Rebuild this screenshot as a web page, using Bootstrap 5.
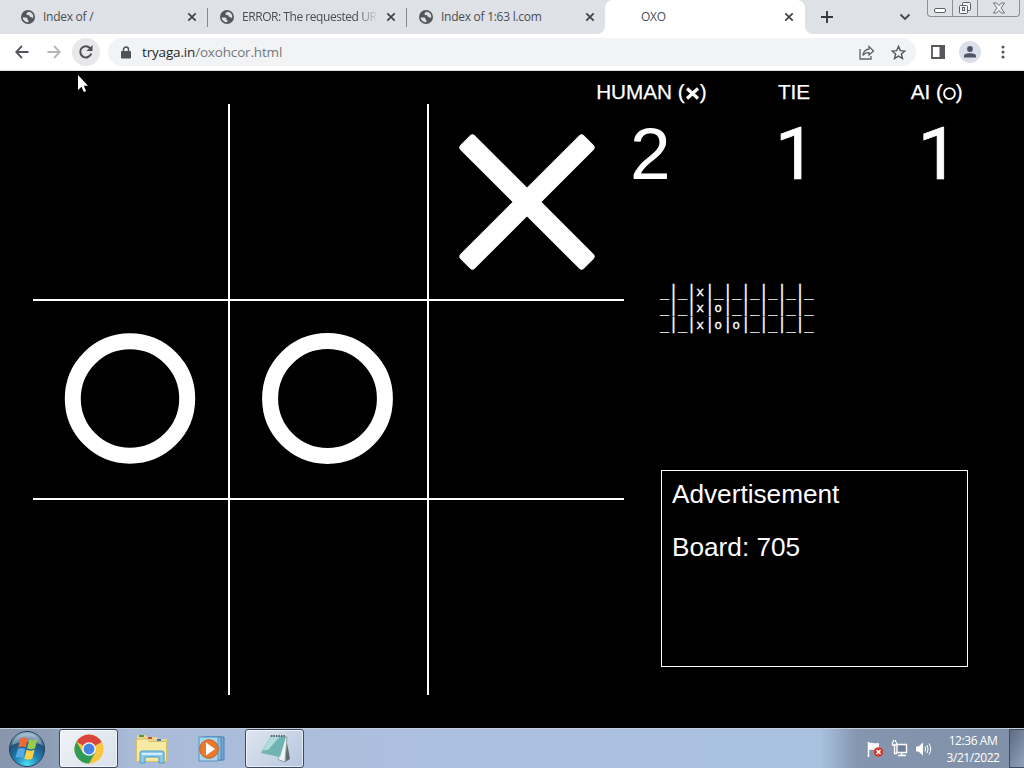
<!DOCTYPE html>
<html lang="en">
<head>
  <meta charset="UTF-8">
  <title>OXO</title>
  <link href="https://cdn.jsdelivr.net/npm/bootstrap@5.3.0/dist/css/bootstrap.min.css" rel="stylesheet">
  <style>
    body {
      width: 1024px;
      height: 768px;
      overflow: hidden;
      background: #000;
      font-family: "Open Sans", "Noto Sans", sans-serif;
    }
    svg { display: block; flex-shrink: 0; }

    /* browser tabs */
    .tabstrip { height: 34px; background: #dee1e6; }
    .tab { height: 34px; font-size: 12px; color: #4b4e53; white-space: nowrap; letter-spacing: -0.27px; }
    .tab-a { width: 208px; padding-left: 21px; padding-right: 11px; }
    .tab-b { width: 199px; padding-left: 12px; padding-right: 11px; }
    .tab-c { width: 198px; padding-left: 12px; padding-right: 10px; }
    .tab-sep { width: 1px; height: 19px; background: #85888d; margin-left: -1px; }
    .tab-title { margin-left: 8px; margin-right: 8px; }
    .tab-fade {
      letter-spacing: -0.45px;
      -webkit-mask-image: linear-gradient(90deg, #000 85%, transparent);
      mask-image: linear-gradient(90deg, #000 85%, transparent);
    }
    .tab-active { width: 200px; background: #fff; border-radius: 8px 8px 0 0; padding: 0 11px 0 36px; }
    .corner-l, .corner-r { width: 8px; height: 34px; background: #fff; }
    .corner-l { margin-left: -8px; }
    .corner-l::before, .corner-r::before { content: ""; display: block; height: 34px; background: #dee1e6; }
    .corner-l::before { border-bottom-right-radius: 8px; }
    .corner-r::before { border-bottom-left-radius: 8px; }
    .win-btns { width: 93px; height: 17px; margin-left: 16px; border: 1px solid #8b9097; border-top: 0; border-radius: 0 0 4px 4px; }
    .win-btns > div { width: 25px; border-right: 1px solid #8b9097; height: 16px; }
    .win-btns > div:last-child { border-right: 0; }

    /* address bar */
    .toolbar { height: 37px; background: #fff; border-bottom: 1px solid #dcdee1; }
    .reload { width: 28px; height: 28px; background: #e8e8ea; margin-left: 11px; }
    .omnibox { width: 808px; height: 28px; background: #f1f3f4; font-size: 13.5px; color: #75787c; padding: 0 10px 0 13px; letter-spacing: -0.17px; }
    .omnibox b { font-weight: 400; color: #26282b; }
    .url { margin-left: 11px; }
    .avatar { width: 22px; height: 22px; background: #dadfe9; margin-left: 14px; }

    /* game page */
    .game { height: 657px; color: #fff; font-family: "Liberation Sans", Arial, sans-serif; }
    .left-side { width: 580px; padding: 33px 0 0 33px; }
    .board { display: grid; width: 591px; grid-template-columns: 197px 199px 195px; grid-template-rows: 197px 199px 195px; }
    .board > div { display: flex; align-items: center; justify-content: center; }
    .line-r { border-right: 2px solid #fff; }
    .line-b { border-bottom: 2px solid #fff; }
    .right-side { width: 444px; }
    .scores { width: 428px; height: 212px; }
    .score-name { font-size: 20.7px; line-height: 24px; padding-top: 9px; white-space: nowrap; -webkit-text-stroke: 0.25px #fff; }
    .score-name svg { display: inline-block; vertical-align: -1px; }
    .score-num { font-size: 73px; line-height: 80px; margin-top: 10px; margin-left: -2px; }
    .score-one { font-family: Roboto, sans-serif; margin-left: 3px; -webkit-text-stroke: 0.7px #fff; }
    .mini { margin: 0 0 0 80px; font-family: "DejaVu Sans Mono", monospace; font-size: 15px; line-height: 16.4px; height: 187px; overflow: visible; color: #fff; -webkit-text-stroke: 0.3px #fff; }
    .mini span { font-size: 13px; letter-spacing: 1.2px; line-height: 1; }
    .ad { width: 307px; height: 197px; margin-left: 81px; border: 1px solid #fff; padding: 8px 10px; font-size: 26.2px; line-height: 30px; }
    .ad p { margin-bottom: 23px; }

    /* taskbar */
    .taskbar {
      height: 40px;
      border-top: 1px solid #c3cddb;
      background: linear-gradient(90deg, #8796ac 0, #8d9db5 50px, #a9bbd7 130px, #acbfde 400px, #a9c1df 820px, #8495af 858px, #8190a8 1024px);
    }
    .task { width: 59px; height: 39px; border: 1px solid #3d4a5e; border-radius: 3px; box-shadow: inset 0 0 0 1px rgba(255,255,255,.6); }
    .task-on { background: linear-gradient(135deg, #eff3f8, #d9e0ea); }
    .task-open { background: linear-gradient(135deg, #dfe5ee, #b4c6e0); }
    .clock { width: 66px; margin-left: 8px; font-size: 12px; line-height: 17px; color: #fff; letter-spacing: -0.42px; }
    .peek { width: 15px; height: 39px; margin-left: 3px; border: 1px solid #3f4b60; border-right: 0; background: linear-gradient(120deg, #5d6c84, #93a2b8); }

    .cursor { position: absolute; left: 77px; top: 74px; }
  </style>
</head>
<body>
  <svg width="0" height="0" class="position-absolute">
    <symbol id="globe" viewBox="0 0 14 14">
      <circle cx="7" cy="7" r="7" fill="#53575c"/>
      <path d="M1.600 7.400 5.500 7.500l1.200 1.300-.3 1 1.200.6-.3 1.800A5.500 5.500 0 0 1 1.600 7.400zM8 1.700l-1.800.8-.9 1.500 1.200 1.200 1.600-.3.700 1.800 1.600.2.600 1.300 1.300-.9A5.500 5.500 0 0 0 8 1.700z" fill="#dee1e6"/>
    </symbol>
    <symbol id="close" viewBox="0 0 10 10">
      <path d="M1.300 1.300 8.700 8.700M8.700 1.300 1.300 8.700" stroke="#3f4246" stroke-width="1.700"/>
    </symbol>
  </svg>

  <div class="tabstrip d-flex">
    <div class="tab tab-a d-flex align-items-center">
      <svg width="14" height="14"><use href="#globe"/></svg>
      <span class="tab-title flex-grow-1">Index of /</span>
      <svg width="10" height="10"><use href="#close"/></svg>
    </div>
    <div class="tab-sep align-self-center"></div>
    <div class="tab tab-b d-flex align-items-center">
      <svg width="14" height="14"><use href="#globe"/></svg>
      <span class="tab-title tab-fade flex-grow-1">ERROR: The requested UR</span>
      <svg width="10" height="10"><use href="#close"/></svg>
    </div>
    <div class="tab-sep align-self-center"></div>
    <div class="tab tab-c d-flex align-items-center">
      <svg width="14" height="14"><use href="#globe"/></svg>
      <span class="tab-title flex-grow-1">Index of 1:63 l.com</span>
      <svg width="10" height="10"><use href="#close"/></svg>
    </div>
    <div class="corner-l"></div>
    <div class="tab tab-active d-flex align-items-center justify-content-between">
      <span>OXO</span>
      <svg width="10" height="10"><use href="#close"/></svg>
    </div>
    <div class="corner-r"></div>
    <svg class="align-self-center ms-2" width="12" height="12"><path d="M6 0v12M0 6h12" stroke="#35383c" stroke-width="1.900"/></svg>
    <svg class="align-self-center ms-auto" width="12" height="8"><path d="M1.500 1.500 6 6l4.500-4.500" fill="none" stroke="#45484c" stroke-width="1.900"/></svg>
    <div class="win-btns d-flex me-1">
      <div class="d-flex justify-content-center">
        <svg width="12" height="16"><rect x=".5" y="8.500" width="11" height="4" rx="1.500" fill="#fff" stroke="#5c6068"/></svg>
      </div>
      <div class="d-flex justify-content-center">
        <svg width="14" height="16"><g fill="#f4f5f7" stroke="#5c6068"><rect x="4.500" y="2.500" width="8" height="8" rx="1"/><rect x="1.500" y="5.500" width="8" height="8" rx="1"/><rect x="4.500" y="7.500" width="2" height="3"/></g></svg>
      </div>
      <div class="d-flex justify-content-center flex-grow-1">
        <svg width="14" height="16"><path d="M1.500 3h3.200L7 5.600 9.300 3h3.200L9 8l3.500 5H9.300L7 10.400 4.700 13H1.500L5 8z" fill="#f4f5f7" stroke="#6a6e75"/></svg>
      </div>
    </div>
  </div>

  <div class="toolbar d-flex align-items-center">
    <svg width="14" height="14" fill="none" stroke="#505357" stroke-width="1.800" style="margin-left: 15px"><path d="M13.500 7H1.500M7 1 1.200 7 7 13"/></svg>
    <svg width="14" height="14" fill="none" stroke="#b4b6b9" stroke-width="1.800" style="margin-left: 18px"><path d="M.5 7h12M7 1l5.800 6L7 13"/></svg>
    <div class="reload rounded-circle d-flex align-items-center justify-content-center me-2">
      <svg width="16" height="16"><path d="M13.200 9.500A5.600 5.600 0 1 1 12 4.100" fill="none" stroke="#4d5054" stroke-width="2"/><path d="M14.500 1v6h-6z" fill="#4d5054"/></svg>
    </div>
    <div class="omnibox rounded-pill d-flex align-items-center">
      <svg width="10" height="13"><rect y="5" width="10" height="7.500" rx="1" fill="#4f5256"/><path d="M2.500 6V3.500a2.500 2.500 0 0 1 5 0V6" fill="none" stroke="#4f5256" stroke-width="1.500"/></svg>
      <span class="url"><b>tryaga.in</b>/oxohcor.html</span>
      <svg class="ms-auto" width="16" height="15" fill="none" stroke="#606368" stroke-width="1.300"><path d="M1 4v10h11v-3"/><path d="M10 1.500 14.500 6 10 10V7.700C7 7.700 5.200 8.600 4 10.500 4.300 7 6.500 4.500 10 4z"/></svg>
      <svg class="ms-3" width="15" height="15" viewBox="0 0 15 15"><path d="m7.500 1.300 1.800 4.300 4.600.4-3.500 3 1.100 4.500-4-2.400-4 2.400 1.100-4.500-3.500-3 4.600-.4z" fill="none" stroke="#55585c" stroke-width="1.400"/></svg>
    </div>
    <svg width="14" height="14" style="margin-left: 15px"><path d="M1 1h12v12H1z" fill="none" stroke="#55585c" stroke-width="1.800"/><path d="M8.500 0H14v14H8.500z" fill="#55585c"/></svg>
    <div class="avatar rounded-circle d-flex align-items-center justify-content-center">
      <svg width="14" height="14" fill="#4c5466"><circle cx="7" cy="4" r="2.900"/><path d="M1 12.500v-1.700C1 9 4.500 8.300 7 8.300s6 .7 6 2.500v1.700z"/></svg>
    </div>
    <svg width="4" height="14" fill="#505357" style="margin-left: 20px"><circle cx="2" cy="2" r="1.500"/><circle cx="2" cy="7" r="1.500"/><circle cx="2" cy="12" r="1.500"/></svg>
  </div>

  <div class="game d-flex">
    <div class="left-side">
      <div class="board">
        <div class="line-r line-b"></div>
        <div class="line-r line-b"></div>
        <div class="line-b">
          <svg width="139" height="139" fill="#fff"><g transform="translate(70 70)"><rect x="-87.400" y="-10.200" width="174.800" height="20.400" rx="3.500" transform="rotate(45)"/><rect x="-87.400" y="-10.200" width="174.800" height="20.400" rx="3.500" transform="rotate(-45)"/></g></svg>
        </div>
        <div class="line-r line-b">
          <svg width="135" height="135"><circle cx="67" cy="66.500" r="57.200" fill="none" stroke="#fff" stroke-width="16"/></svg>
        </div>
        <div class="line-r line-b">
          <svg width="135" height="135"><circle cx="66.500" cy="66.500" r="57.400" fill="none" stroke="#fff" stroke-width="16"/></svg>
        </div>
        <div class="line-b"></div>
        <div class="line-r"></div>
        <div class="line-r"></div>
        <div></div>
      </div>
    </div>

    <div class="right-side">
      <div class="scores row g-0 text-center">
        <div class="col">
          <div class="score-name">HUMAN (<svg width="15" height="13"><path d="m2 1.500 11 10M13 1.500l-11 10" stroke="#fff" stroke-width="3.200"/></svg>)</div>
          <div class="score-num">2</div>
        </div>
        <div class="col">
          <div class="score-name">TIE</div>
          <div class="score-num score-one">1</div>
        </div>
        <div class="col">
          <div class="score-name">AI (<svg width="13" height="13"><circle cx="6.500" cy="6.500" r="5.400" fill="none" stroke="#fff" stroke-width="1.900"/></svg>)</div>
          <div class="score-num score-one">1</div>
        </div>
      </div>
<pre class="mini">_|_|<span>x</span>|_|_|_|_|_|_
_|_|<span>x</span>|<span>o</span>|_|_|_|_|_
_|_|<span>x</span>|<span>o</span>|<span>o</span>|_|_|_|_</pre>
      <div class="ad">
        <p>Advertisement</p>
        <p>Board: 705</p>
      </div>
    </div>
  </div>

  <div class="taskbar d-flex align-items-center">
    <svg class="ms-2" width="38" height="38" viewBox="0 0 38 38">
      <defs>
        <radialGradient id="orb" cx=".5" cy=".95" r=".9"><stop offset="0" stop-color="#4fe0f5"/><stop offset=".4" stop-color="#1f7fb5"/><stop offset=".75" stop-color="#225379"/><stop offset="1" stop-color="#8fb0c8"/></radialGradient>
      </defs>
      <circle cx="19" cy="19" r="17.500" fill="url(#orb)" stroke="#26405c"/>
      <path d="M4 15a15.500 15.500 0 0 1 30 0c-9-4-21-4-30 0z" fill="#fff" opacity=".3"/>
      <path d="M12.500 8.500c2.500-1.500 5-1.200 7.500 0l-2.300 9c-2.300-1.200-4.900-1.200-7.500 0z" fill="#ee6a35"/>
      <path d="M21.300 9.300c2.500 1.300 5.200 1.300 8 0l-2.300 9c-2.500 1.200-5.200 1.200-8 0z" fill="#9acb4c"/>
      <path d="M9.800 18.900c2.500-1.400 5-1.200 7.500 0l-2.300 9c-2.200-1.200-4.700-1.200-7.500 0z" fill="#56a9e4"/>
      <path d="M18.600 19.700c2.500 1.300 5.200 1.300 8 0l-2.300 9c-2.500 1.200-5.200 1.200-8 0z" fill="#fbd044"/>
    </svg>
    <div class="task task-on d-flex align-items-center justify-content-center" style="margin-left: 13px">
      <svg width="30" height="30" viewBox="-16 -16 32 32">
        <circle r="15.500" fill="#f9c440"/>
        <path d="M0 0-13.400-7.800A15.500 15.500 0 0 1 13.400-7.800z" fill="#d9453d"/>
        <path d="M0 0v-7.800h13.400z" fill="#d9453d"/>
        <path d="M-13.400-7.800A15.500 15.500 0 0 0 0 15.500L6.500 4-6.500 4z" fill="#2f9b57"/>
        <circle r="7.300" fill="#f4f6f8"/>
        <circle r="5.800" fill="#4482e4"/>
      </svg>
    </div>
    <svg width="34" height="32" viewBox="0 0 34 32" style="margin-left: 16px">
      <path d="M3 2h9l1 2h10l1 2h9v8H3z" fill="#e9d88c"/>
      <path d="M5 2h5v2H5z" fill="#4c9d3e"/><path d="M14 4h4v2h-4z" fill="#c74f37"/><path d="M23 6h4v2h-4z" fill="#4a78b0"/>
      <path d="M2.500 6h11l2 2.500h17v20h-30z" fill="#f6e9a4" stroke="#d6bd69"/>
      <path d="M6 30V20q0-2 2-2h20q2 0 2 2v10h-5v-6H11v6z" fill="#8bc9ea" stroke="#4c9bc9"/>
      <path d="M8 20h20v2H8z" fill="#d3eefb"/>
    </svg>
    <svg width="28" height="28" viewBox="0 0 28 28" style="margin-left: 30px">
      <path d="M7 2h19v23H7z" fill="#70a8d4" stroke="#4a82b1"/><path d="M4 2h19v23H4z" fill="#8bbde1" stroke="#4a82b1"/><path d="M1 2h19v24H1z" fill="#a9d4ef" stroke="#5892bf"/>
      <circle cx="11" cy="14" r="9.300" fill="#e8792d" stroke="#c65e1c"/><path d="m8 7.500 9 6.500-9 6.500z" fill="#fff"/>
    </svg>
    <div class="task task-open d-flex align-items-center justify-content-center" style="margin-left: 19px">
      <svg width="32" height="32" viewBox="0 0 32 32">
        <path d="m27 4 4 22-5 3z" fill="#5c6d6e"/><path d="m11 3 17 1-2 25-6-2z" fill="#edf2f3" stroke="#92a2a8"/>
        <path d="M12 3 27 4l-6 20-19-4z" fill="#6fb3b2"/><path d="M12 3 21 3.600 9 17l-5 .5z" fill="#b0dcd9"/><path d="M12 3h15" stroke="#5b6b70" stroke-width="2" stroke-dasharray="1.500 1"/>
      </svg>
    </div>
    <svg class="ms-auto" width="17" height="18" viewBox="0 0 17 18"><path d="M1.500 2v15" stroke="#fff" stroke-width="1.500"/><path d="M2 3c3-1 4 1 10 0v7c-5 1-7-1-10 0z" fill="#fff"/><circle cx="11.500" cy="12" r="4.800" fill="#cf3d31"/><path d="m9.500 10 4 4m0-4-4 4" stroke="#fff" stroke-width="1.500"/></svg>
    <svg width="17" height="17" viewBox="0 0 17 17" style="margin-left: 7px"><path d="M6 4.500h9.500v8H6z" fill="#718099" stroke="#fff" stroke-width="1.400"/><path d="M7 15.500h8M10.700 13v2M1.500 2v3h4V2M3.500 5v8.500H6M2.500 0v2m2-2v2" fill="none" stroke="#fff" stroke-width="1.300"/></svg>
    <svg width="17" height="16" viewBox="0 0 17 16" style="margin-left: 7px"><path d="M1 5.500h2.500L8 1.500v13l-4.500-4H1z" fill="#fff"/><path d="M10 5.500q1.300 2.500 0 5M12 4q2.200 4 0 8M14 2.500q3.500 5.500 0 11" fill="none" stroke="#fff"/></svg>
    <div class="clock text-center">12:36 AM<br>3/21/2022</div>
    <div class="peek"></div>
  </div>

  <svg class="cursor" width="13" height="20"><path d="M1 1v15l3.500-3.300 2.300 5.300 2.300-1-2.300-5.200H11z" fill="#fff"/></svg>

  <script src="https://cdn.jsdelivr.net/npm/bootstrap@5.3.0/dist/js/bootstrap.bundle.min.js"></script>
</body>
</html>
